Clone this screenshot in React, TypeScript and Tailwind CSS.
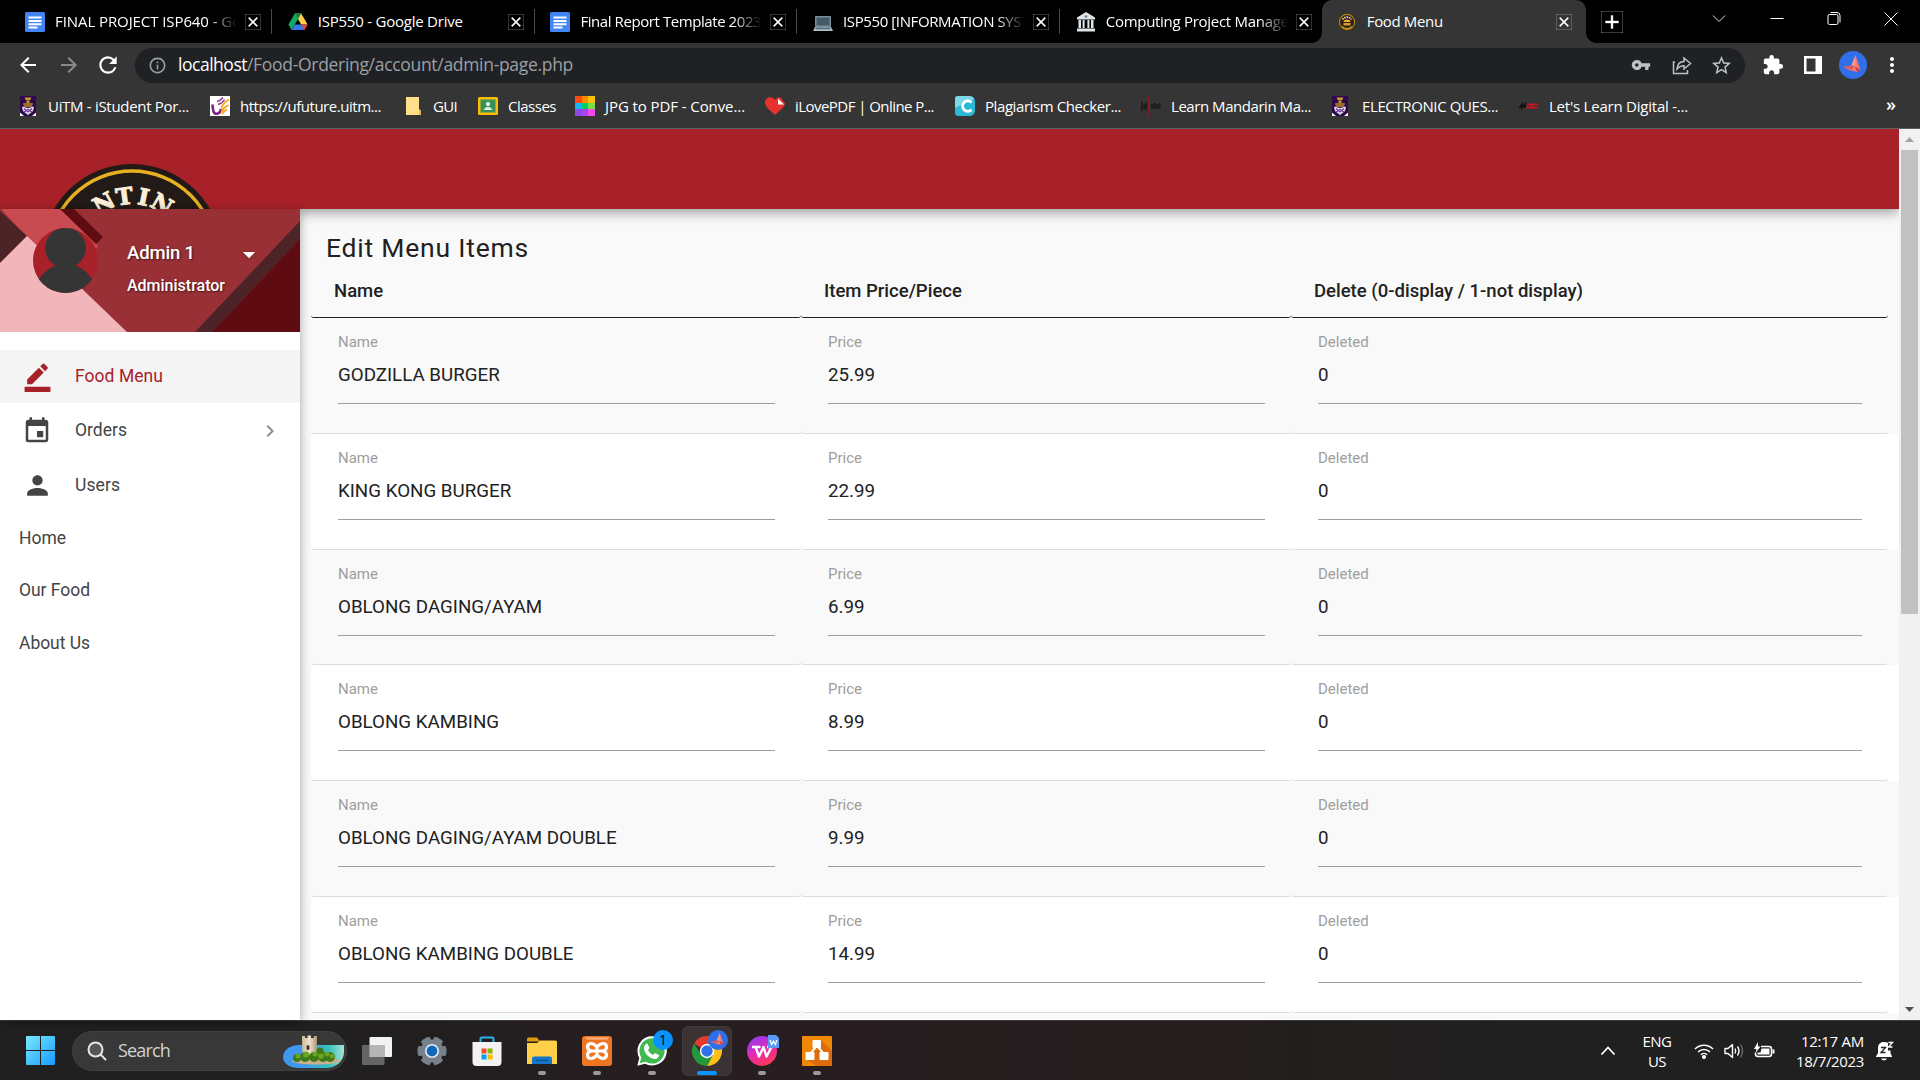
import React, { useLayoutEffect, useRef, useState } from "react";
import {
  MdArrowBack, MdArrowForward, MdRefresh, MdInfoOutline, MdVpnKey, MdStarBorder, MdExtension,
  MdMoreVert, MdBorderColor, MdEvent, MdPerson, MdChevronRight, MdClose, MdAdd,
} from "react-icons/md";

/** Single line of text whose tracking is adjusted so that it spans `w` pixels. */
function Fit({ w, children, className = "" }: { w: number; children: string; className?: string }) {
  const ref = useRef<HTMLSpanElement>(null);
  const [ls, setLs] = useState(0);
  useLayoutEffect(() => {
    if (ref.current) setLs((w - ref.current.getBoundingClientRect().width) / children.length);
  }, [w, children]);
  return (
    <span ref={ref} className={"inline-block whitespace-pre " + className} style={{ letterSpacing: ls }}>
      {children}
    </span>
  );
}

/* ---------- favicons ---------- */

const DocsIcon = () => (
  <svg viewBox="0 0 20 20" className="h-5 w-5">
    <rect width="20" height="20" rx="1.5" fill="#4285f4" />
    <path d="M3.5 4.5h13v2h-13zM3.5 8h13v2h-13zM3.5 11.2h13v2h-13zM3.5 14.6h9v2h-9z" fill="#fff" />
  </svg>
);
const DriveIcon = () => (
  <svg viewBox="0 0 20 18" className="h-[18px] w-5">
    <path d="M6.8 0.6 10 6 3.6 17 0.4 11.6z" fill="#11a861" />
    <path d="M6.8 .6h6.4L19.6 11.6h-6.4z" fill="#ffcf48" />
    <path d="M3.6 17 6.8 11.6H19.6L16.4 17z" fill="#3777e3" />
    <path d="M13.2 11.6h6.4L16.4 17z" fill="#ea4335" />
    <path d="M6.8 .6h6.4L10 6z" fill="#0d8045" />
  </svg>
);
const LaptopIcon = () => (
  <svg viewBox="0 0 20 20" className="h-5 w-5">
    <rect x="2" y="4" width="16" height="11" rx="1" fill="#78909c" />
    <rect x="3.5" y="5.5" width="13" height="8" fill="#455a64" />
    <path d="M2 15h16l2 4H0z" fill="#b0bec5" />
    <path d="M3 15.6h14l.8 1.6H2.200z" fill="#546e7a" />
  </svg>
);
const BankIcon = () => (
  <svg viewBox="0 0 20 20" className="h-5 w-5" fill="#dfe5e8">
    <path d="M10 0 19 5.500v2H1v-2z" />
    <path d="M2.500 8h2.500v8H2.500zM6.600 8h2v8h-2zM11.400 8h2v8h-2zM15 8h2.500v8H15zM1 16.500h18V19.500H1z" />
    <circle cx="10" cy="4.500" r="1.300" fill="#607d8b" />
  </svg>
);
const FoodIcon = () => (
  <svg viewBox="0 0 18 18" className="h-[18px] w-[18px]">
    <circle cx="9" cy="9" r="8.600" fill="#2a2018" />
    <circle cx="9" cy="9" r="7.600" fill="none" stroke="#b8860b" strokeWidth="1.200" />
    <path d="M4.500 6.500a5.500 5.500 0 0 1 9 0" fill="none" stroke="#d8cdb4" strokeWidth="1.800" strokeDasharray="1.600 .7" />
    <path d="M5.500 9a3.500 2.500 0 0 1 7 0z" fill="#f0a92a" />
    <path d="M5.500 10h7v2.500h-7z" fill="#d89a2d" />
    <path d="M4 13.500a7 7 0 0 0 10 0" fill="none" stroke="#c79525" strokeWidth="1.300" />
  </svg>
);
const UitmIcon = () => (
  <svg viewBox="0 0 16 20" className="h-5 w-4">
    <rect width="16" height="20" fill="#2d0a4e" />
    <path d="M4.500 1.500h7l-1.500 3h-4zM6.500 5h3v5h-3z" fill="#c8962a" />
    <path d="M3 7h10l-1 4H4z" fill="#9b6a28" />
    <path d="M2 11c2-1 4 1 6 1s4-2 6-1l-1 4-5 4-5-4z" fill="#e6deef" />
    <path d="M4 12.500 8 16l4-3.500M4 16l4-2.500 4 2.500" fill="none" stroke="#6a3d93" strokeWidth="1.200" />
    <path d="M0 16.500 4 20H0zM16 16.500 12 20h4z" fill="#fff" />
  </svg>
);
const UfutureIcon = () => (
  <svg viewBox="0 0 20 20" className="h-5 w-5">
    <rect width="20" height="20" fill="#fff" />
    <path d="M2.500 8.500C3 15 3.500 18 7 17.800c2.500-.2 3.500-2 4-5" fill="none" stroke="#7a2389" strokeWidth="2.600" />
    <path d="M7 5.500c3-.5 4-2 6-4M8 8.500c3-1 5-2 6.500-5" fill="none" stroke="#8c3f97" strokeWidth="1.500" />
    <path d="M11.500 12c1-4 3-6 7.500-8.500M11.500 15.500c2-4 4-5 7-6.500M12 18c2-3 3-3.500 5-4.500" fill="none" stroke="#f6a81c" strokeWidth="1.900" />
  </svg>
);
const FolderFav = () => (
  <svg viewBox="0 0 16 18" className="h-[18px] w-4">
    <path d="M1 0h13v12l2 2v4H1z" fill="#ffe08a" />
    <path d="M14 12v6h2v-4z" fill="#e2b84f" />
  </svg>
);
const ClassIcon = () => (
  <svg viewBox="0 0 20 18" className="h-[18px] w-5">
    <rect width="20" height="18" rx="1.500" fill="#fbbc04" />
    <rect x="2.500" y="2.500" width="15" height="13" fill="#39915a" />
    <circle cx="10" cy="7" r="2" fill="#fff" />
    <path d="M6 13c0-4 8-4 8 0z" fill="#e5f3e8" />
  </svg>
);
const GridFav = () => (
  <div className="grid h-5 w-5 grid-cols-3 grid-rows-3">
    <i className="bg-[#ff4a12]" /><i className="bg-[#ff8a00]" /><i className="bg-[#ffc107]" />
    <i className="bg-[#16b5f5]" /><i className="bg-[#05cf63]" /><i className="bg-[#77df4c]" />
    <i className="bg-[#8b4be8]" /><i className="bg-[#a745f0]" /><i className="bg-[#f24be8]" />
  </div>
);
const HeartFav = () => (
  <svg viewBox="0 0 20 18" className="h-[18px] w-5">
    <path d="M10 18C4 12.500 0 9.500 0 5.500 0 0 7-2 10 3c2-3.500 5-3 6-2.200L20 6.500C20 9.500 16 12.500 10 18z" fill="#e5322d" />
    <path d="M13 1.500 19 7.500h-6z" fill="#fff" />
  </svg>
);
const PlagFav = () => (
  <svg viewBox="0 0 20 20" className="h-5 w-5">
    <path d="M3 0h11q6 0 6 6v8q0 6-6 6H3q-3 0-3-3V3q0-3 3-3z" fill="#29b9d6" />
    <path d="M3 0h11q4 0 5 3L0 12V3q0-3 3-3z" fill="#7ed6e6" />
    <path d="M16.500 6.500a5.200 5.200 0 1 0 0 7.200" fill="none" stroke="#fff" strokeWidth="2.800" />
  </svg>
);
const MandarinFav = () => (
  <svg viewBox="0 0 20 20" className="h-5 w-5">
    <path d="M1 6v9M3.500 8v5M5.500 6.500v8M11 8v5M13.500 7v6M16 8v5M18.500 7v6" stroke="#151515" strokeWidth="2" opacity=".75" />
    <rect x="6.500" width="2.500" height="20" fill="#7d1c22" />
  </svg>
);
const MbcFav = () => (
  <svg viewBox="0 0 20 8" className="h-2 w-5">
    <path d="M.5 6 3 2v4l3-4v4" fill="none" stroke="#111" strokeWidth="1.600" />
    <path d="M8 5.800 10 2.200h3L12 4l1 1.800zM13.500 5.800l1.500-3.600h4.500M15 5.600h4" fill="none" stroke="#c4161c" strokeWidth="1.600" />
  </svg>
);

const Bird = ({ className }: { className: string }) => (
  <svg viewBox="0 0 28 28" className={className}>
    <circle cx="14" cy="14" r="14" fill="#2f6fea" />
    <path d="M4 16 16 14 16.500 4l3 9 2 6-3 2-7-1.500z" fill="#f4776b" />
    <path d="M16.500 4 12.500 14l4 5z" fill="#ff9a8d" />
    <path d="M4 16l12-1.500-3.500 4z" fill="#d95558" />
    <path d="m15 15 3.500 6 3-2z" fill="#b93f55" />
  </svg>
);

/* ---------- browser chrome ---------- */

const tabs = [
  { icon: <DocsIcon />, label: "FINAL PROJECT ISP640 - Go", w: 186, fade: true },
  { icon: <DriveIcon />, label: "ISP550 - Google Drive", w: 145, fade: false },
  { icon: <DocsIcon />, label: "Final Report Template 20232", w: 189, fade: true },
  { icon: <LaptopIcon />, label: "ISP550 [INFORMATION SYST", w: 186, fade: true },
  { icon: <BankIcon />, label: "Computing Project Manage", w: 183, fade: true },
];

const bookmarks = [
  { box: "w-[190px]", iw: "w-7", icon: <UitmIcon />, label: "UiTM - iStudent Por...", w: 141 },
  { box: "w-[195px]", iw: "w-[30px]", icon: <UfutureIcon />, label: "https://ufuture.uitm...", w: 141 },
  { box: "w-[73px]", iw: "w-7", icon: <FolderFav />, label: "GUI", w: 24 },
  { box: "w-[97px]", iw: "w-[30px]", icon: <ClassIcon />, label: "Classes", w: 48 },
  { box: "w-[190px]", iw: "w-[30px]", icon: <GridFav />, label: "JPG to PDF - Conve...", w: 140 },
  { box: "w-[190px]", iw: "w-[30px]", icon: <HeartFav />, label: "iLovePDF | Online P...", w: 139 },
  { box: "w-[186px]", iw: "w-[30px]", icon: <PlagFav />, label: "Plagiarism Checker...", w: 136 },
  { box: "w-[191px]", iw: "w-[30px]", icon: <MandarinFav />, label: "Learn Mandarin Ma...", w: 140 },
  { box: "w-[187px]", iw: "w-[30px]", icon: <UitmIcon />, label: "ELECTRONIC QUES...", w: 136 },
  { box: "w-[190px]", iw: "w-[30px]", icon: <MbcFav />, label: "Let's Learn Digital -...", w: 139 },
];

function TabStrip() {
  return (
    <div className="flex h-[43px] items-center bg-black pl-[25px] text-[15px]">
      {tabs.map((t, i) => (
        <div key={t.label} className={i === 4 ? "flex h-full w-[246px] items-center" : "flex h-full w-[262.7px] items-center"}>
          <div className="flex w-[30px] shrink-0">{t.icon}</div>
          <div className={t.fade ? "w-[184px] overflow-hidden [mask-image:linear-gradient(90deg,#000_83%,transparent_99%)]" : "w-[184px] overflow-hidden"}>
            <Fit w={t.w}>{t.label}</Fit>
          </div>
          <div className="flex w-8 justify-center pr-1"><MdClose className="h-4 w-4" strokeWidth={0.6} stroke="currentColor" /></div>
          {i < 4 && <div className="h-[25px] w-px bg-[#4a4a4a]" />}
        </div>
      ))}
      <div className="relative flex h-full w-[264px] items-center rounded-t-[10px] bg-[#353535] pl-[16px]">
        <div className="absolute bottom-0 -left-[10px] h-[10px] w-[10px] bg-[radial-gradient(circle_at_0_0,#000_9.500px,#353535_10px)]" />
        <div className="absolute -right-[10px] bottom-0 h-[10px] w-[10px] bg-[radial-gradient(circle_at_100%_0,#000_9.500px,#353535_10px)]" />
        <div className="flex w-[29px]"><FoodIcon /></div>
        <div className="w-[189px]"><Fit w={76}>Food Menu</Fit></div>
        <MdClose className="h-4 w-4" strokeWidth={0.6} stroke="currentColor" />
      </div>
      <MdAdd className="ml-[15px] h-[22px] w-[22px]" strokeWidth={0.5} stroke="currentColor" />
      <div className="ml-auto flex h-full items-start pt-2.5">
        <svg viewBox="0 0 16 18" className="mr-[42px] h-[18px] w-4" fill="none" stroke="#ddd"><path d="m2 5.500 6 6 6-6" /></svg>
        <svg viewBox="0 0 16 18" className="mr-[41px] h-[18px] w-4" fill="none" stroke="#fff"><path d="M1.500 8.500h13" /></svg>
        <svg viewBox="0 0 16 18" className="mr-[41px] h-[18px] w-4" fill="none" stroke="#fff"><rect x="2" y="4.500" width="10" height="10" rx="1.500" /><path d="M4.500 2.500h6.500q3 0 3 3v7" /></svg>
        <svg viewBox="0 0 16 18" className="mr-[21px] h-[18px] w-4" fill="none" stroke="#fff"><path d="m1.500 2.500 13 13m0-13-13 13" /></svg>
      </div>
    </div>
  );
}

function Toolbar() {
  return (
    <div className="flex h-[45px] items-center bg-[#353535] pb-[1px] pl-4">
      <MdArrowBack className="h-6 w-6" />
      <MdArrowForward className="ml-[17px] h-6 w-6 text-[#8a8a8a]" />
      <MdRefresh className="ml-[14px] h-[26px] w-[26px]" />
      <div className="ml-[14px] flex h-[35px] w-[1610px] items-center rounded-full bg-[#202124] pl-[13px]">
        <MdInfoOutline className="h-[19px] w-[19px] text-[#9aa0a6]" />
        <div className="ml-[11px] flex pb-0.5 text-[17.5px]">
          <Fit w={69}>localhost</Fit>
          <Fit w={326} className="text-[#9aa0a6]">/Food-Ordering/account/admin-page.php</Fit>
        </div>
        <MdVpnKey className="ml-auto h-5 w-5 text-[#bdc1c6]" />
        <svg viewBox="0 0 20 20" className="ml-[21px] h-5 w-5" fill="none" stroke="#bdc1c6" strokeWidth="1.500">
          <path d="M3 7H1.500v11.500h14V15" />
          <path d="M5 14c.5-5 3-7.500 7-7.500V3l6.500 5.500L12 14v-3.300c-3 0-5 .8-7 3.300z" />
        </svg>
        <MdStarBorder className="mr-[12px] ml-[18px] h-[23px] w-[23px] text-[#bdc1c6]" />
      </div>
      <MdExtension className="ml-[17px] h-[22px] w-[22px]" />
      <svg viewBox="0 0 18 18" className="ml-[20px] h-[18px] w-[18px]"><path fillRule="evenodd" d="M0 0h18v18H0zM2.500 2.500v13h9v-13z" fill="#fff" /></svg>
      <Bird className="ml-[17px] h-7 w-7" />
      <MdMoreVert className="ml-[13px] h-6 w-6" />
    </div>
  );
}

function BookmarksBar() {
  return (
    <div className="flex h-[41px] items-center border-b border-[#5f6063] bg-[#353535] pb-1 pl-[20px] text-[15px]">
      {bookmarks.map((b) => (
        <div key={b.label} className={"flex shrink-0 items-center " + b.box}>
          <div className={"flex shrink-0 " + b.iw}>{b.icon}</div>
          <Fit w={b.w}>{b.label}</Fit>
        </div>
      ))}
      <div className="mr-[24px] ml-auto pb-1 text-lg leading-none font-semibold">»</div>
    </div>
  );
}

/* ---------- page ---------- */

const menu = [
  ["GODZILLA BURGER", "25.99"],
  ["KING KONG BURGER", "22.99"],
  ["OBLONG DAGING/AYAM", "6.99"],
  ["OBLONG KAMBING", "8.99"],
  ["OBLONG DAGING/AYAM DOUBLE", "9.99"],
  ["OBLONG KAMBING DOUBLE", "14.99"],
];

function BrandLogo() {
  const glyphs: [string, number][] = [["N", -29], ["T", -7.6], ["I", 11.700], ["N", 31]];
  return (
    <svg viewBox="0 0 180 45" className="mt-[35px] ml-[42px] h-[45px] w-[180px]">
      <circle cx="90" cy="90" r="90" fill="#211a16" />
      <circle cx="90" cy="90" r="83" fill="none" stroke="#e6b022" strokeWidth="3.400" />
      <g fill="#fbf0d8" stroke="#fbf0d8" strokeWidth="1" fontFamily="DejaVu Serif" fontWeight="700" fontSize="23" textAnchor="middle">
        {glyphs.map(([g, a], i) => (
          <text key={i} x="90" y="40" transform={`rotate(${a} 90 90)`}>{g}</text>
        ))}
      </g>
    </svg>
  );
}

function UserCard() {
  return (
    <div className="relative h-[123px] w-[300px]">
      <svg viewBox="0 0 300 123" className="absolute inset-0 h-full w-full">
        <rect width="300" height="123" fill="#983035" />
        <path d="M1 0H62L98 37 70 80 26 27z" fill="#c84b52" />
        <path d="M0 2 27 27 0 54z" fill="#4c2428" />
        <path d="M0 54 27 27 127 123H0z" fill="#f0b6ba" />
        <path d="M60 0H74L103 28 96 35z" fill="#5f0c11" />
        <path d="M300 12V30L212 123H195z" fill="#4c2428" />
        <path d="M300 30V123H212z" fill="#5e0c11" />
        <clipPath id="av"><circle cx="65.500" cy="51.500" r="32.500" /></clipPath>
        <g clipPath="url(#av)">
          <rect x="30" y="15" width="70" height="72" fill="#a82128" />
          <circle cx="65.500" cy="39" r="20.300" fill="#353535" />
          <ellipse cx="65.500" cy="84" rx="30" ry="29" fill="#353535" />
        </g>
      </svg>
      <div className="relative flex flex-col pt-[30px] pl-[127px] text-white [text-shadow:1px_1px_2px_rgba(0,0,0,.55)]">
        <div className="flex h-7 items-center text-[18.500px] leading-7 font-medium">
          <Fit w={68}>Admin 1</Fit>
          <svg viewBox="0 0 14 8" className="mt-1 ml-[47px] h-[7px] w-[14px] drop-shadow"><path d="M0 0h14L7 7z" fill="#fff" /></svg>
        </div>
        <div className="mt-[7px] text-[16px] leading-6 font-medium"><Fit w={98}>Administrator</Fit></div>
      </div>
    </div>
  );
}

function Sidebar() {
  return (
    <aside className="z-10 w-[300px] shrink-0 bg-white text-[17.500px] text-[#444] shadow-[0_2px_10px_rgba(0,0,0,.35)]">
      <UserCard />
      <nav className="pt-[18px]">
        <div className="flex h-[53px] items-center bg-[#f4f4f4] pl-[22px] text-[#a82128]">
          <MdBorderColor className="h-[31px] w-[31px]" />
          <Fit w={88} className="ml-[22px]">Food Menu</Fit>
        </div>
        <div className="flex h-[55px] items-center pl-[22px]">
          <MdEvent className="h-[30px] w-[30px]" />
          <Fit w={52} className="ml-[23px]">Orders</Fit>
          <MdChevronRight className="ml-auto mr-[18px] h-6 w-6 text-[#8e8e8e]" />
        </div>
        <div className="flex h-[54px] items-center pl-[22px]">
          <MdPerson className="h-[31px] w-[31px]" />
          <Fit w={45} className="ml-[22px]">Users</Fit>
        </div>
        <div className="flex h-[52px] items-center pl-[19px]"><Fit w={47}>Home</Fit></div>
        <div className="flex h-[53px] items-center pl-[19px]"><Fit w={71}>Our Food</Fit></div>
        <div className="flex h-[53px] items-center pl-[19px]"><Fit w={71}>About Us</Fit></div>
      </nav>
    </aside>
  );
}

function Field({ label, value }: { label: string; value: string }) {
  return (
    <div className="h-full pt-[12px] pr-[26px] pl-[27px]">
      <div className="text-[15px] leading-6 text-[#9e9e9e]">{label}</div>
      <div className="h-[50px] border-b border-[#9e9e9e] pt-[6px] text-[18.750px] leading-[30px] text-[#212121]">{value}</div>
    </div>
  );
}

const cols = "grid grid-cols-[490px_490px_597px]";

function MenuTable() {
  return (
    <main className="h-full w-[1599px] overflow-hidden bg-[#f9f9f9] pl-[11px] text-[#212121]">
      <h4 className="h-[58px] pt-[19px] pl-[15px] text-[26.500px] leading-[40px]"><Fit w={203}>Edit Menu Items</Fit></h4>
      <div className={cols + " h-[51px] text-[18.500px] leading-[50px] font-medium"}>
        {["Name", "Item Price/Piece", "Delete (0-display / 1-not display)"].map((h) => (
          <div key={h} className="rounded-[3px] border-b border-[#212121] pl-[23px] leading-[48px]">{h}</div>
        ))}
      </div>
      {menu.map(([name, price], i) => (
        <div key={name} className={cols + (i % 2 ? " h-[115.800px] bg-white" : " h-[115.800px]")}>
          <div className="rounded-[3px] border-b border-[#dcdcdc]"><Field label="Name" value={name} /></div>
          <div className="rounded-[3px] border-b border-[#dcdcdc]"><Field label="Price" value={price} /></div>
          <div className="rounded-[3px] border-b border-[#dcdcdc]"><Field label="Deleted" value="0" /></div>
        </div>
      ))}
    </main>
  );
}

function Scrollbar() {
  return (
    <div className="flex w-[21px] flex-col items-center bg-[#f1f1f1]">
      <svg viewBox="0 0 21 21" className="h-[21px] w-[21px]"><path d="m6 13 4.500-5 4.500 5z" fill="#a3a3a3" /></svg>
      <div className="h-[464px] w-[17px] bg-[#c1c1c1]" />
      <svg viewBox="0 0 21 21" className="mt-auto h-[21px] w-[21px]"><path d="m6 8 4.500 5 4.500-5z" fill="#505050" /></svg>
    </div>
  );
}

/* ---------- taskbar ---------- */

const Castle = () => (
  <svg viewBox="0 0 62 34" className="h-[34px] w-[62px]">
    <defs>
      <linearGradient id="sea" x1="0" x2="1"><stop offset=".3" stopColor="#3f97ee" /><stop offset=".75" stopColor="#35bfc0" /><stop offset="1" stopColor="#a6e3cd" /></linearGradient>
      <linearGradient id="twr" x1="0" x2="1"><stop offset="0" stopColor="#cdb99a" /><stop offset=".5" stopColor="#efe3cd" /><stop offset="1" stopColor="#ae9676" /></linearGradient>
    </defs>
    <path d="M17 10H61v7c0 9-8 16-18 16H16C6 33 0 28 0 22S6 10 17 10z" fill="url(#sea)" />
    <ellipse cx="33" cy="26" rx="24" ry="3.500" fill="#c9b089" />
    <path d="M19 4V1h3v2h2.500V.5H28V3h3V1h3v4l-.5 18h-14z" fill="url(#twr)" />
    <rect x="23.500" y="10" width="3" height="5" rx="1.500" fill="#48333a" />
    <g fill="#3d7a17"><circle cx="14" cy="23" r="4" /><circle cx="22" cy="22" r="5" /><circle cx="31" cy="22" r="5" /><circle cx="40" cy="22" r="5" /><circle cx="47" cy="22" r="5" /><circle cx="37" cy="16" r="3.500" /></g>
    <g fill="#6ba522"><circle cx="15" cy="21" r="2.500" /><circle cx="23" cy="19.500" r="3" /><circle cx="32" cy="19" r="2.500" /><circle cx="38" cy="21" r="2.800" /><circle cx="44" cy="19" r="2.500" /><circle cx="49" cy="21" r="2.200" /></g>
  </svg>
);

const TaskView = () => (
  <svg viewBox="0 0 30 28" className="h-7 w-[30px]">
    <rect x="7.500" width="22.500" height="20" rx="1" fill="#f2f2f2" />
    <rect y="8" width="22.500" height="20" rx="1" fill="#6f6f6f" opacity=".88" />
    <rect x="7.500" y="8" width="15" height="12" fill="#b5b5b5" />
  </svg>
);
const Gear = () => (
  <svg viewBox="0 0 30 30" className="h-[30px] w-[30px]">
    <g fill="#77818b">
      <circle cx="15" cy="15" r="11.500" />
      {[0, 60, 120, 180, 240, 300].map((a) => <path key={a} d="M10 1.500 13 .5h4l3 1-.5 5h-9z" transform={`rotate(${a + 30} 15 15)`} />)}
    </g>
    <circle cx="15" cy="15" r="7" fill="#e8edf2" />
    <circle cx="15" cy="15" r="5.400" fill="#1268b8" />
  </svg>
);
const Store = () => (
  <svg viewBox="0 0 30 30" className="h-[30px] w-[30px]">
    <path d="M8.500 7V3q0-1.500 1.500-1.500h10q1.500 0 1.500 1.500v4" fill="none" stroke="#2bb4ec" strokeWidth="2" />
    <path d="M.5 6h29v20q0 4-4 4H4.500q-4 0-4-4z" fill="#f2f2f2" />
    <path d="M9.500 12.500h5v5h-5z" fill="#f25022" /><path d="M15.500 12.500h5v5h-5z" fill="#7fba00" />
    <path d="M9.500 18.500h5v5h-5z" fill="#00a4ef" /><path d="M15.500 18.500h5v5h-5z" fill="#ffb900" />
  </svg>
);
const Explorer = () => (
  <svg viewBox="0 0 30 28" className="h-7 w-[30px]">
    <path d="M0 2q0-1.500 1.500-1.500H10l3 4H0z" fill="#dc9b10" />
    <path d="M0 6h10l3-2.500h15.500q1.500 0 1.500 1.500v22H0z" fill="#ffcf48" />
    <path d="M5 27v-5.500q0-2 2-2h16q2 0 2 2V27z" fill="#1377c9" />
    <path d="M9 23.500h12" stroke="#0a4d94" strokeWidth="1.300" />
  </svg>
);
const Xampp = () => (
  <svg viewBox="0 0 30 30" className="h-[30px] w-[30px]">
    <rect width="30" height="30" rx="3" fill="#ee7623" />
    <path d="M3 1.500h24l-2 2H5z" fill="#f8b58a" />
    <path d="M6 15h18M9.500 15Q5.500 14 5.500 11T9 7.500q3 0 6 3.500 3-3.500 6-3.500 3.500 0 3.500 3.500t-4 4q4 1 4 4T21 22.500q-3 0-6-3.500-3 3.500-6 3.500-3.500 0-3.500-3.500t4-4M15 10v10" fill="none" stroke="#fff" strokeWidth="3.200" strokeLinejoin="round" />
  </svg>
);
const WhatsApp = () => (
  <div className="relative">
    <svg viewBox="0 0 30 30" className="h-[30px] w-[30px]">
      <path d="M.3 29.700 2.300 22A14.700 14.700 0 1 1 8 27.700z" fill="#fff" />
      <path d="m2.700 27.300 1.600-5.700A12.600 12.600 0 1 1 8.600 25.800z" fill="#3fb950" />
      <path d="M10.500 7.500 12.500 12l-1.500 2c1 2.300 2.800 4 5 5l2-2 4 2c.3 2-2 4-4 4-5.500 0-11-6-11-11 0-2 1.500-4.500 3.500-4.500z" fill="#fff" />
    </svg>
    <div className="absolute -top-[6px] left-[16px] flex h-5 w-5 items-center justify-center rounded-full bg-[#0a93ff] text-[14px] leading-none text-black">1</div>
  </div>
);
const Chrome = () => (
  <div className="relative">
    <svg viewBox="0 0 30 30" className="h-[30px] w-[30px]">
      <path d="M15 15 2 7.500A15 15 0 0 1 28 7.500L27.500 8z" fill="#e33b2e" />
      <path d="M15 8H28.300A15 15 0 0 1 15 30l6-11.500z" fill="#fbc116" />
      <path d="M2 7.500A15 15 0 0 0 15 30l6-11.500-12 0z" fill="#25983f" />
      <circle cx="15" cy="15" r="7.200" fill="#fff" /><circle cx="15" cy="15" r="5.700" fill="#3073e8" />
    </svg>
    <Bird className="absolute -top-[6px] left-[16px] h-5 w-5" />
  </div>
);
const Wps = () => (
  <div className="relative">
    <svg viewBox="0 0 30 30" className="h-[30px] w-[30px]">
      <defs><linearGradient id="wps" x1=".2" y1="0" x2=".7" y2="1"><stop offset="0" stopColor="#8b3cf5" /><stop offset=".5" stopColor="#e52bb5" /><stop offset="1" stopColor="#ff3a4c" /></linearGradient></defs>
      <circle cx="15" cy="15" r="15" fill="url(#wps)" />
      <path d="M5 11h7.500l-4 0L12 20.500 16.500 11l3 9.500L24.500 11H20" fill="none" stroke="#fff" strokeWidth="2.400" strokeLinejoin="round" />
    </svg>
    <svg viewBox="0 0 11 13" className="absolute -top-[1px] left-[21px] h-[13px] w-[11px]"><path d="M0 0h8l3 3v10H0z" fill="#5a9af5" /><path d="m2 5 1.700 4.500L5.500 6l1.800 3.500L9 5" fill="none" stroke="#fff" strokeWidth="1.200" /></svg>
  </div>
);
const Drawio = () => (
  <svg viewBox="0 0 30 30" className="h-[30px] w-[30px]">
    <rect width="30" height="30" rx="1" fill="#f08705" />
    <path d="m19 4 11 11v15H14L4 23z" fill="#df6c0c" />
    <path d="M14 11 8 18M16 11l6 7" stroke="#fff" strokeWidth="2" />
    <rect x="10.500" y="4" width="8.500" height="8" rx="1" fill="#fff" />
    <rect x="3.500" y="16" width="9" height="8" rx="1" fill="#fff" /><rect x="17.500" y="16" width="9" height="8" rx="1" fill="#fff" />
  </svg>
);

const apps = [
  { icon: <TaskView />, state: "" }, { icon: <Gear />, state: "" }, { icon: <Store />, state: "" },
  { icon: <Explorer />, state: "run" }, { icon: <Xampp />, state: "run" }, { icon: <WhatsApp />, state: "run" },
  { icon: <Chrome />, state: "active" }, { icon: <Wps />, state: "run" }, { icon: <Drawio />, state: "run" },
];

function Taskbar() {
  return (
    <footer className="flex h-[60px] items-center border-t border-[#3c3c3c] bg-[linear-gradient(90deg,#202020_0%,#211f1f_18%,#281d20_40%,#241e1e_65%,#202020_80%)] text-white">
      <svg viewBox="0 0 29 29" className="ml-[26px] h-[29px] w-[29px]">
        <defs><linearGradient id="win" x1="0" y1="0" x2="1" y2="1" gradientUnits="objectBoundingBox"><stop offset="0" stopColor="#7aeaff" /><stop offset="1" stopColor="#169bff" /></linearGradient></defs>
        <path d="M1 0h13v14H0V1q0-1 1-1zM15 0h13q1 0 1 1v13H15zM0 15h14v14H1q-1 0-1-1zM15 15h14v13q0 1-1 1H15z" fill="url(#win)" />
      </svg>
      <div className="ml-[17px] flex h-10 w-[275px] items-center rounded-full border border-[#424242] bg-[#383838] pl-[14px]">
        <svg viewBox="0 0 20 20" className="h-5 w-5" fill="none" stroke="#e6e6e6" strokeWidth="2"><circle cx="8.500" cy="8.500" r="7" fill="#555" /><path d="m13.500 13.500 5 5" strokeLinecap="round" /></svg>
        <Fit w={52} className="ml-[11px] text-[18px] text-[#d2d2d2]">Search</Fit>
        <div className="mt-[2px] mr-[1px] ml-auto"><Castle /></div>
      </div>
      <div className="ml-[2.500px] flex">
        {apps.map((a, i) => (
          <div key={i} className="flex w-[55px] justify-center">
            <div className={a.state === "active" ? "relative flex h-[50px] w-[50px] items-center justify-center rounded-md border border-[#403a3b] bg-[#3a3233]" : "relative flex h-[50px] w-[50px] items-center justify-center"}>
              {a.icon}
              {a.state === "run" && <div className="absolute bottom-[1px] left-[21px] h-1 w-2 rounded-full bg-[#9a9a9a]" />}
              {a.state === "active" && <div className="absolute bottom-0 left-[14px] h-1 w-5 rounded-full bg-[#0a93ff]" />}
            </div>
          </div>
        ))}
      </div>
      <div className="ml-auto flex items-center text-[15px] leading-5">
        <svg viewBox="0 0 16 10" className="h-[10px] w-4" fill="none" stroke="#fff" strokeWidth="1.800"><path d="m1.500 8.500 6.500-7 6.500 7" /></svg>
        <div className="ml-[26px] flex w-[30px] flex-col items-center"><Fit w={29}>ENG</Fit><Fit w={18}>US</Fit></div>
        <svg viewBox="0 0 20 16" className="ml-[22px] h-4 w-5" fill="none" stroke="#fff" strokeWidth="1.500">
          <path d="M1 6a12.700 12.700 0 0 1 18 0M4 9a8.500 8.500 0 0 1 12 0M6.800 11.800a4.600 4.600 0 0 1 6.400 0" /><circle cx="10" cy="14" r="1.300" fill="#fff" />
        </svg>
        <svg viewBox="0 0 20 16" className="ml-[10px] h-4 w-5" fill="none" stroke="#fff" strokeWidth="1.400">
          <path d="M1 5.500h3L8.500 1.500v13L4 10.500H1z" strokeLinejoin="round" /><path d="M11 5.500q1.500 2.500 0 5M13.500 3.500q3 4.500 0 9" /><path d="M16.500 1.500q4 6.500 0 13" stroke="#6a6a6a" />
        </svg>
        <svg viewBox="0 0 21 18" className="ml-[10px] h-[18px] w-[21px]">
          <path d="M7 4.500h8q2.500 0 2.500 2.500v5q0 2.500-2.500 2.500H4Q1.500 14.500 1.500 12v-1.500" fill="none" stroke="#fff" strokeWidth="1.500" />
          <path d="M7.500 6.500h8v6h-12v-2h3zM18.500 7.500h2v4h-2zM4 0 0 7h2.500L1.500 11 6.500 4.500H4z" fill="#fff" />
        </svg>
        <div className="ml-[20px] flex w-[69px] flex-col items-end"><Fit w={63}>12:17 AM</Fit><Fit w={68}>18/7/2023</Fit></div>
        <svg viewBox="0 0 18 20" className="mr-[26px] ml-[12px] h-5 w-[18px]">
          <path d="M8 1C4 1 2 3.500 2 7v5L0 15.500v.5h16v-.500L14.500 12V9.500H12V1.700Q10 1 8 1zM5 17.500h6q-1 2-3 2t-3-2z" fill="#fff" />
          <path d="M5 6.500h4.500L5 11.500h4.500" fill="none" stroke="#222" strokeWidth="1.300" />
          <path d="M12.500 1.500h4L12.500 6h4" fill="none" stroke="#fff" strokeWidth="1.300" />
        </svg>
      </div>
    </footer>
  );
}

export default function App() {
  return (
    <div className="flex h-[1080px] w-[1920px] flex-col overflow-hidden font-['Open_Sans',sans-serif] text-white">
      <TabStrip />
      <Toolbar />
      <BookmarksBar />
      <div className="flex h-[891px] font-['Roboto',sans-serif]">
        <div className="flex w-[1899px] flex-col">
          <header className="z-20 h-20 shrink-0 bg-[#a82128] shadow-[0_3px_12px_rgba(0,0,0,.4)] [clip-path:inset(0_0_-20px_0)]"><BrandLogo /></header>
          <div className="flex h-[811px]">
            <div className="z-30 flex h-full w-[300px] shrink-0"><Sidebar /></div>
            <MenuTable />
          </div>
        </div>
        <Scrollbar />
      </div>
      <Taskbar />
    </div>
  );
}
